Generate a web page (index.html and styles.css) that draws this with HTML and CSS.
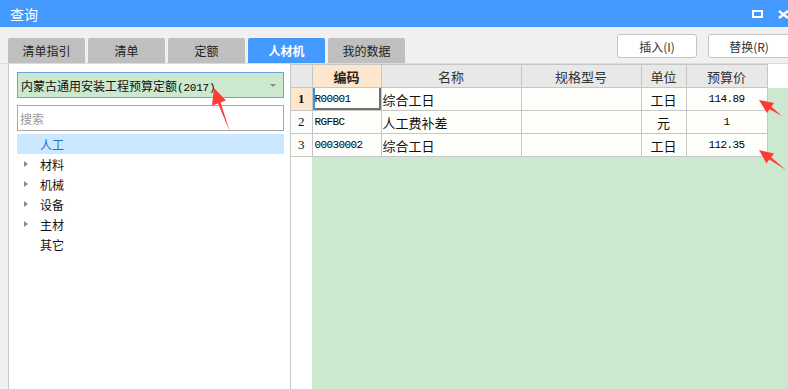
FILE: index.html
```html
<!DOCTYPE html>
<html lang="zh">
<head>
<meta charset="utf-8">
<title>查询</title>
<link rel="stylesheet" href="styles.css">
</head>
<body>
<div class="win">
  <div class="titlebar">
    <span class="title">查询</span>
    <div class="wctl">
      <svg class="ic-max" width="11" height="8" viewBox="0 0 11 8"><rect x="1" y="1" width="9" height="6" fill="none" stroke="#fff" stroke-width="2"/></svg>
      <svg class="ic-close" width="11" height="9" viewBox="0 0 11 9"><path d="M1 1 L10 8 M10 1 L1 8" stroke="#fff" stroke-width="2.4" fill="none"/></svg>
    </div>
  </div>
  <div class="toolbar">
    <div class="tabs">
      <div class="tab">清单指引</div>
      <div class="tab">清单</div>
      <div class="tab">定额</div>
      <div class="tab active">人材机</div>
      <div class="tab">我的数据</div>
    </div>
    <div class="actions">
      <button class="btn">插入(I)</button>
      <button class="btn btn-last">替换(R)</button>
    </div>
  </div>
  <div class="content">
    <div class="leftpane">
      <div class="select"><span>内蒙古通用安装工程预算定额<span class="lat">(2017)</span></span><span class="caret"></span></div>
      <div class="search">搜索</div>
      <ul class="tree">
        <li class="node selected"><span class="tri none"></span>人工</li>
        <li class="node"><span class="tri"></span>材料</li>
        <li class="node"><span class="tri"></span>机械</li>
        <li class="node"><span class="tri"></span>设备</li>
        <li class="node"><span class="tri"></span>主材</li>
        <li class="node"><span class="tri none"></span>其它</li>
      </ul>
    </div>
    <div class="gridpane">
      <table class="grid">
        <colgroup>
          <col class="c-rn"><col class="c-code"><col class="c-name"><col class="c-spec"><col class="c-unit"><col class="c-price"><col>
        </colgroup>
        <thead>
          <tr>
            <th class="rn"></th>
            <th class="hl">编码</th>
            <th>名称</th>
            <th>规格型号</th>
            <th>单位</th>
            <th>预算价</th>
            <th class="rest"></th>
          </tr>
        </thead>
        <tbody>
          <tr>
            <td class="rn cur">1</td>
            <td class="mono sel">R00001</td>
            <td class="txt">综合工日</td>
            <td></td>
            <td class="ctr">工日</td>
            <td class="mono ctr">114.89</td>
            <td class="rest"></td>
          </tr>
          <tr>
            <td class="rn">2</td>
            <td class="mono">RGFBC</td>
            <td class="txt">人工费补差</td>
            <td></td>
            <td class="ctr">元</td>
            <td class="mono ctr">1</td>
            <td class="rest"></td>
          </tr>
          <tr>
            <td class="rn">3</td>
            <td class="mono">00030002</td>
            <td class="txt">综合工日</td>
            <td></td>
            <td class="ctr">工日</td>
            <td class="mono ctr">112.35</td>
            <td class="rest"></td>
          </tr>
        </tbody>
      </table>
      <div class="filler"></div>
    </div>
  </div>
  <svg class="annot" width="788" height="389" viewBox="0 0 788 389">
    <polygon fill="#ff3a33" points="214,88 226,100.5 220.6,102.6 230,132 218,103.6 212,105.5"/>
    <polygon fill="#ff3a33" points="759,100 774,103 771.4,106.8 782,116 769.6,109.2 767,113"/>
    <polygon fill="#ff3a33" points="759,150 774,153.5 771.1,157.2 786,170 769.3,159.6 766.5,163.4"/>
  </svg>
</div>
</body>
</html>
```

FILE: styles.css
```css
* { box-sizing: border-box; }
html, body { margin: 0; padding: 0; }
body {
  width: 788px;
  height: 389px;
  overflow: hidden;
  background: #f0f0f0;
  font-family: "Noto Sans CJK SC", "Noto Sans", sans-serif;
  font-size: 12px;
  color: #222;
}
.win {
  position: relative;
  width: 788px;
  height: 389px;
  display: flex;
  flex-direction: column;
}
.titlebar {
  height: 27px;
  flex: 0 0 27px;
  background: #4499ff;
  display: flex;
  align-items: center;
  padding-left: 10px;
}
.title {
  color: #fff;
  font-size: 14px;
  line-height: 1;
}
.wctl {
  margin-left: auto;
  display: flex;
  align-items: center;
  gap: 15px;
  margin-right: -1px;
  padding-top: 1px;
}
.ic-max, .ic-close { display: block; }

.toolbar {
  height: 36px;
  flex: 0 0 36px;
  display: flex;
  padding-left: 8px;
}
.tabs {
  display: flex;
  gap: 3px;
  align-self: flex-end;
}
.tab {
  width: 77px;
  height: 25px;
  background: #bfbfbf;
  border-radius: 2px 2px 0 0;
  display: flex;
  align-items: center;
  justify-content: center;
  font-size: 12px;
  color: #222;
}
.tab.active {
  background: #4499ff;
  color: #fff;
  font-weight: bold;
}
.actions {
  margin-left: auto;
  display: flex;
  gap: 11px;
  padding-top: 7px;
  margin-right: -2px;
}
.btn {
  width: 80px;
  height: 24px;
  background: #fff;
  border: 1px solid #c4c4c4;
  border-radius: 3px;
  font-family: "Noto Sans CJK SC", "Noto Sans", sans-serif;
  font-size: 12px;
  color: #333;
  padding: 0;
}
.btn-last { width: 82px; }

.content {
  flex: 1;
  display: flex;
  border-top: 1px solid #dcdcdc;
  min-height: 0;
}
.leftpane {
  margin-left: 8px;
  width: 283px;
  background: #fff;
  border-left: 1px solid #c8c8c8;
  border-right: 1px solid #c8c8c8;
  padding: 8px 6px 0 8px;
  display: flex;
  flex-direction: column;
}
.select {
  height: 26px;
  background: #cce8cf;
  border: 1px solid #6aa6de;
  display: flex;
  align-items: center;
  padding-left: 3px;
  padding-right: 7px;
  font-size: 12px;
  color: #111;
}
.lat { font-family: "Liberation Mono", monospace; font-size: 11px; letter-spacing: -0.2px; color: #000; }
.caret {
  margin-left: auto;
  width: 0;
  height: 0;
  border-left: 3px solid transparent;
  border-right: 3px solid transparent;
  border-top: 3px solid #888;
}
.search {
  margin-top: 7px;
  height: 26px;
  border: 1px solid #a8a8a8;
  display: flex;
  align-items: center;
  padding-left: 2px;
  font-size: 12px;
  color: #999;
}
.tree {
  list-style: none;
  margin: 3px 0 0 0;
  padding: 0;
}
.node {
  height: 20px;
  display: flex;
  align-items: center;
  padding-left: 7px;
  font-size: 12px;
  color: #111;
}
.node.selected {
  background: #cce8ff;
  color: #1a6fd8;
}
.tri {
  width: 0;
  height: 0;
  border-top: 3px solid transparent;
  border-bottom: 3px solid transparent;
  border-left: 4px solid #8a8a8a;
  margin-right: 12px;
}
.tri.none { border-left-color: transparent; }

.gridpane {
  flex: 1;
  display: flex;
  flex-direction: column;
  background: #fff;
  min-width: 0;
}
.grid {
  border-collapse: collapse;
  table-layout: fixed;
  width: 100%;
}
.c-rn { width: 21px; }
.c-code { width: 69px; }
.c-name { width: 140px; }
.c-spec { width: 120px; }
.c-unit { width: 45px; }
.c-price { width: 81px; }
.grid th, .grid td {
  border: 1px solid #c6c6c6;
  height: 23px;
  padding: 0;
  font-weight: normal;
  white-space: nowrap;
  overflow: hidden;
}
.grid th {
  background: #e8e8e8;
  font-size: 13px;
  color: #333;
  text-align: center;
}
.grid th.hl {
  background: #fde7cc;
  font-weight: bold;
  color: #222;
}
.grid th.rn, .grid td.rn { border-left: none; }
.grid td {
  background: #fefefb;
  font-size: 13px;
  color: #111;
}
.grid td.rn {
  background: #fdfdfb;
  text-align: center;
  font-family: "Liberation Serif", serif;
  font-size: 13px;
}
.grid td.rn.cur {
  background: #fde7cc;
  font-weight: bold;
}
.grid td.txt { padding-left: 1px; }
.grid td.mono {
  font-family: "Liberation Mono", monospace;
  font-size: 11px;
  letter-spacing: -0.6px;
  color: #000;
  padding-left: 2px;
}
.grid td.ctr { text-align: center; padding-left: 0; }
.grid td.sel {
  box-shadow: inset 2px 0 0 #3d8fe6, inset -2px -2px 0 #707070;
}
.grid th.rest {
  border: none;
  background: #fff;
}
.grid td.rest {
  border: none;
  background: #cce8cf;
}
.filler {
  flex: 1;
  margin-left: 21px;
  background: #cce8cf;
}
.annot {
  position: absolute;
  left: 0;
  top: 0;
  pointer-events: none;
}
```
